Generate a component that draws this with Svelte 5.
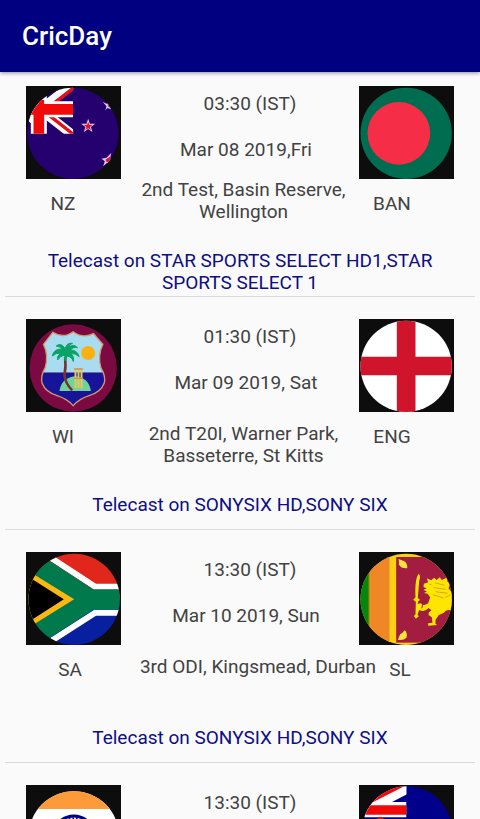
<script lang="ts">
    type Flag = "nz" | "ban" | "wi" | "eng" | "sa" | "sl" | "ind" | "aus";

    type Match = {
        time: string,
        date?: string,
        home?: string,
        away?: string,
        homeFlag: Flag,
        awayFlag: Flag,
        venue?: string,
        channels?: string,
        raised?: boolean,
        wide?: boolean
    }

    const matches: Match[] = [
        {
            time: "03:30 (IST)",
            date: "Mar 08 2019,Fri",
            home: "NZ",
            away: "BAN",
            homeFlag: "nz",
            awayFlag: "ban",
            venue: "2nd Test, Basin Reserve, Wellington",
            channels: "STAR SPORTS SELECT HD1,STAR SPORTS SELECT 1",
            raised: true,
        },
        {
            time: "01:30 (IST)",
            date: "Mar 09 2019, Sat",
            home: "WI",
            away: "ENG",
            homeFlag: "wi",
            awayFlag: "eng",
            venue: "2nd T20I, Warner Park, Basseterre, St Kitts",
            channels: "SONYSIX HD,SONY SIX",
        },
        {
            time: "13:30 (IST)",
            date: "Mar 10 2019, Sun",
            home: "SA",
            away: "SL",
            homeFlag: "sa",
            awayFlag: "sl",
            venue: "3rd ODI, Kingsmead, Durban",
            channels: "SONYSIX HD,SONY SIX",
            wide: true,
        },
        {
            time: "13:30 (IST)",
            homeFlag: "ind",
            awayFlag: "aus",
        },
    ];

    // drawing area of each badge
    const boxes: Record<Flag, string> = {
        nz: "36 18 284 279",
        ban: "42 18 284 279",
        wi: "36 22 284 279",
        eng: "42 22 284 279",
        sa: "36 22 284 279",
        sl: "42 22 284 279",
        ind: "80 91 284 279",
        aus: "356 91 284 279",
    };

    const discs: Record<Flag, [number, number, number]> = {
        nz: [176, 160, 137],
        ban: [183, 160, 137],
        wi: [177, 169, 131],
        eng: [183, 164, 137],
        sa: [180, 164, 137],
        sl: [183, 164, 137],
        ind: [223, 246, 136],
        aus: [500, 230, 135],
    };

    // five pointed star around a centre
    function star(cx: number, cy: number, r: number, inner = 0.4) {
        const points: string[] = [];
        for (let i = 0; i < 10; i++) {
            const len = i % 2 ? r * inner : r;
            const angle = (Math.PI / 5) * i - Math.PI / 2;
            points.push(`${cx + len * Math.cos(angle)},${cy + len * Math.sin(angle)}`);
        }
        return points.join(" ");
    }
</script>

{#snippet badge(flag: Flag)}
    <svg class="badge" viewBox={boxes[flag]} aria-hidden="true">
        <clipPath id="disc-{flag}">
            <circle cx={discs[flag][0]} cy={discs[flag][1]} r={discs[flag][2]} />
        </clipPath>
        <g clip-path="url(#disc-{flag})">
            {#if flag === "nz"}
                <rect x="30" y="10" width="300" height="300" fill="#25006f" />
                <svg x="0" y="22" width="177" height="139" viewBox="0 22 177 139">
                    <path d="M40 118 L190 2 M40 58 L190 176" stroke="#fff" stroke-width="28" />
                    <path d="M110 77 L184 19 M106 107 L184 168" stroke="#e3101c" stroke-width="10" />
                    <path d="M74 10 V170 M0 88 H177" stroke="#fff" stroke-width="48" />
                    <path d="M74 60 V170 M0 88 H177" stroke="#f00a0a" stroke-width="32" />
                </svg>
                <polygon points={star(222, 138, 22)} fill="#e8c8ee" />
                <polygon points={star(222, 139, 14)} fill="#dc1430" />
                <path d="M266 66 L277 71 L288 65 L284 77 L291 88 L279 84 L273 92 L277 79 Z" fill="#e8c8ee" />
                <path d="M281 72 L286 69 L283 77 L287 83 L281 79 Z" fill="#8c1450" />
                <path d="M262 236 L277 233 L291 219 L288 235 L294 242 L286 247 L284 255 L278 249 L267 259 L272 244 Z" fill="#e8c8ee" />
                <path d="M274 239 L289 229 L286 245 L277 246 Z" fill="#dc1430" />
            {:else if flag === "ban"}
                <rect x="40" y="10" width="300" height="300" fill="#006d50" />
                <circle cx="161" cy="160" r="94" fill="#f62d46" />
            {:else if flag === "wi"}
                <rect x="30" y="10" width="300" height="300" fill="#7b0a43" />
                <clipPath id="shield">
                    <path d="M88 98 L116 62 Q148 82 177 60 Q206 82 238 66 L266 98 Q250 130 260 168 Q276 195 270 215 Q260 242 225 252 Q194 262 177 282 Q160 262 129 252 Q94 242 84 215 Q78 195 93 168 Q104 130 88 98 Z" />
                </clipPath>
                <g clip-path="url(#shield)">
                    <rect x="70" y="50" width="210" height="133" fill="#a8dcf0" />
                    <rect x="70" y="183" width="210" height="110" fill="#18149a" />
                    <path d="M136 238 Q142 198 183 194 Q224 198 230 238 Z" fill="#6fd39b" />
                </g>
                <path d="M88 98 L116 62 Q148 82 177 60 Q206 82 238 66 L266 98 Q250 130 260 168 Q276 195 270 215 Q260 242 225 252 Q194 262 177 282 Q160 262 129 252 Q94 242 84 215 Q78 195 93 168 Q104 130 88 98 Z" fill="none" stroke="#d29a6c" stroke-width="4" />
                <circle cx="222" cy="124" r="21" fill="#fbb112" />
                <path d="M153 138 Q156 165 151 190 Q153 215 174 236" fill="none" stroke="#753430" stroke-width="8" />
                <path d="M153 111 Q140 91 126 103 Q137 103 143 113 Q121 109 114 133 Q128 122 139 125 Q128 132 130 145 Q139 131 153 130 Q149 138 153 148 L159 133 Q173 135 178 150 Q181 136 171 126 Q184 124 195 135 Q188 113 169 116 Q175 105 190 108 Q178 95 163 107 Q165 97 175 95 Q158 92 153 111 Z" fill="#08a365" stroke="#08a365" stroke-width="3" />
                <path d="M184 172 V230 M193 172 V230 M202 172 V230" stroke="#e6c95a" stroke-width="6" />
                <path d="M180 172 H206 M180 200 H206" stroke="#c89350" stroke-width="4" />
            {:else if flag === "eng"}
                <rect x="40" y="20" width="300" height="300" fill="#fff" />
                <path d="M183 20 V310 M30 163 H330" stroke="#d0142c" stroke-width="56" />
            {:else if flag === "sa"}
                <rect x="30" y="20" width="300" height="141" fill="#e1261c" />
                <rect x="30" y="161" width="300" height="150" fill="#0820a0" />
                <path d="M30 -13 L243 126 H330 M30 341 L243 204 H330" fill="none" stroke="#fff" stroke-width="18" />
                <path d="M30 -2 L237 134 H330 V195 H237 L30 330 Z" fill="#007a4d" />
                <path d="M30 71 L180 164 L30 257 Z" fill="#fdb714" />
                <path d="M30 88 L149 164 L30 240 Z" fill="#000" />
            {:else if flag === "sl"}
                <rect x="40" y="20" width="300" height="300" fill="#fdd016" />
                <rect x="40" y="20" width="31" height="290" fill="#08850b" />
                <rect x="71" y="20" width="4" height="290" fill="#b88c18" />
                <rect x="75" y="20" width="58" height="290" fill="#ef8727" />
                <rect x="153" y="37" width="180" height="257" fill="#a21d40" />
                <path d="M160 43 L174 48 Q188 53 186 71 Q167 72 163 62 Q157 59 162 56 Z" fill="#ffe23a" />
                <path d="M158 285 L165 269 L172 264 L178 257 Q188 264 184 279 Q174 288 158 285 Z" fill="#ffe23a" />
                <path d="M220 87 Q228 91 222 109 L218 160 L225 166 L219 170 L218 178 L227 175 Q234 186 249 176 L255 158 L247 147 L237 145 L245 140 L235 136 L244 131 L235 127 L236 117 L249 113 L245 101 L258 107 L267 99 L274 106 L284 98 L290 106 L304 99 L307 111 L315 118 L310 131 L317 140 L325 144 L325 200 Q304 190 296 204 L281 211 L271 225 L271 238 L277 241 L249 243 L249 236 L262 234 L260 218 L250 211 L251 203 L259 197 L250 190 Q239 204 222 196 L217 210 L221 215 L212 222 L206 214 L211 209 L212 171 L204 165 L211 158 Q208 106 220 87 Z" fill="#ffe600" />
                <path d="M252 119 H259 M269 114 L298 122 M266 129 L301 134 M271 141 L307 146 M263 150 L295 160 M300 158 L316 151" stroke="#d9a51b" stroke-width="3" />
                <path d="M227 176 L236 159 L230 191" stroke="#a21d40" stroke-width="3" fill="none" />
            {:else if flag === "ind"}
                <rect x="80" y="90" width="290" height="290" fill="#fff" />
                <rect x="80" y="90" width="290" height="73" fill="#ff9a38" />
                <rect x="80" y="328" width="290" height="60" fill="#128807" />
                <circle cx="223" cy="246" r="62" fill="none" stroke="#000080" stroke-width="9" />
                <circle cx="223" cy="246" r="55" fill="none" stroke="#000080" stroke-width="6" stroke-dasharray="5 6" />
            {:else}
                <rect x="350" y="90" width="300" height="290" fill="#00008b" />
                <svg x="350" y="90" width="148" height="150" viewBox="350 90 148 150">
                    <path d="M350 176 L512 92" stroke="#fff" stroke-width="36" />
                    <path d="M350 160 L484 92" stroke="#f00a0a" stroke-width="12" />
                    <path d="M350 165 H498" stroke="#fff" stroke-width="46" />
                    <path d="M350 166 H498" stroke="#f00a0a" stroke-width="28" />
                    <circle cx="420" cy="198" r="11" fill="#f00a0a" />
                </svg>
            {/if}
        </g>
    </svg>
{/snippet}

<div class="screen">
    <header>
        <h1>CricDay</h1>
    </header>

    <ul>
        {#each matches as match}
            <li>
                <div class="teams">
                    {@render badge(match.homeFlag)}
                    <div class="when">
                        <p class="time">{match.time}</p>
                        {#if match.date}
                            <p class="date">{match.date}</p>
                        {/if}
                    </div>
                    {@render badge(match.awayFlag)}
                </div>
                {#if match.venue}
                    <div class="details" class:wide={match.wide}>
                        <p class="name">{match.home}</p>
                        <p class="venue" class:raised={match.raised}>{match.venue}</p>
                        <p class="name">{match.away}</p>
                    </div>
                    <p class="telecast">Telecast on {match.channels}</p>
                {/if}
            </li>
        {/each}
    </ul>
</div>

<style>
    :global(body) {
        background: #fafafa;
    }

    .screen {
        height: 100vh;
        display: flex;
        flex-direction: column;
        overflow: hidden;
        background: #fafafa;
        color: #424242;
        font-family: Roboto, "Liberation Sans", sans-serif;
        font-size: 19px;
        line-height: 22px;
    }

    header {
        position: relative;
        z-index: 1;
        flex: none;
        display: flex;
        align-items: center;
        height: 72px;
        padding: 0 22px;
        background: #000080;
        box-shadow: 0 1px 4px rgba(0, 0, 60, 0.45);
    }

    h1 {
        margin: 0;
        color: #fff;
        font-size: 26px;
        font-weight: 500;
        line-height: 32px;
    }

    p {
        margin: 0;
    }

    ul {
        flex: 1;
        min-height: 0;
        margin: -8px 0 0;
        padding: 0 5px;
        list-style: none;
        overflow-y: auto;
        scrollbar-width: none;
    }

    li {
        box-sizing: border-box;
        height: 233px;
        padding-top: 22px;
        border-bottom: 1px solid #dadada;
    }

    .teams {
        display: flex;
        justify-content: space-between;
        padding: 0 21px;
    }

    .badge {
        flex: none;
        width: 95px;
        height: 93px;
        background: #0d0d0d;
    }

    .when {
        flex: 1;
        padding-top: 7px;
        text-align: center;
    }

    .time {
        padding-left: 20px;
    }

    .date {
        margin-top: 24px;
        padding-left: 12px;
    }

    .details {
        display: grid;
        grid-template-columns: 116px 1fr 60px;
        height: 71px;
        padding-right: 53px;
        text-align: center;
    }

    .details.wide {
        grid-template-columns: 130px 1fr 46px;
        padding-right: 52px;
    }

    .name {
        padding-top: 14px;
    }

    .venue {
        padding-top: 11px;
        padding-left: 4px;
    }

    .venue.raised {
        padding-top: 0;
    }

    .telecast {
        display: flex;
        align-items: center;
        justify-content: center;
        height: 44px;
        padding: 0 20px;
        color: #0d0d85;
        text-align: center;
    }
</style>
